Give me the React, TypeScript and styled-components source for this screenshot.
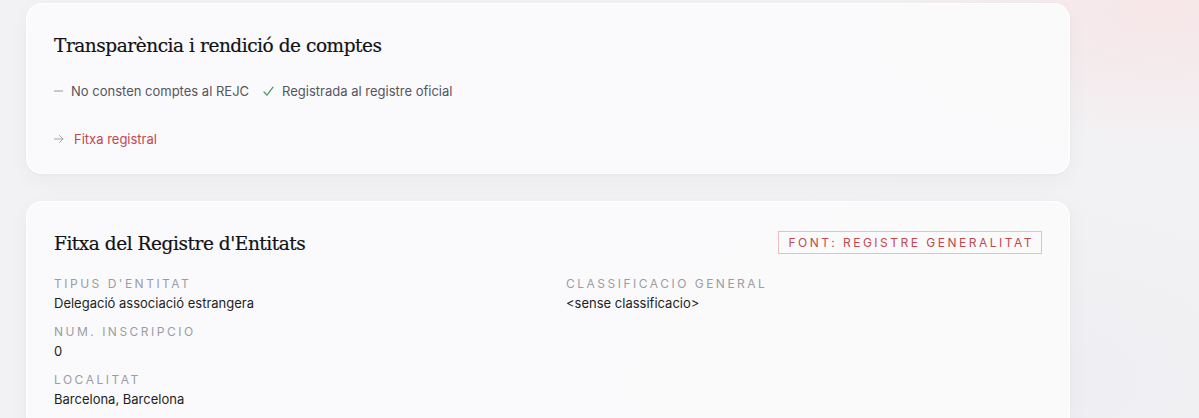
import React from "react";
import styled, { createGlobalStyle } from "styled-components";

const Global = createGlobalStyle`
  html, body { margin: 0; padding: 0; }
  body {
    background: #f2f2f4;
    font-family: Inter, "Noto Sans", sans-serif;
    -webkit-font-smoothing: antialiased;
  }
`;

const Page = styled.div`
  box-sizing: border-box;
  padding: 3px 0 0 26px;
  background:
    radial-gradient(ellipse 420px 200px at 1160px 10px, rgba(250, 220, 222, 0.55), rgba(250, 220, 222, 0) 70%),
    radial-gradient(ellipse 600px 300px at 1000px 380px, rgba(236, 236, 242, 0.6), rgba(236, 236, 242, 0) 70%),
    #f2f2f4;
  overflow: hidden;
  height: 418px;
`;

const Stack = styled.div`
  width: 1044px;
  display: flex;
  flex-direction: column;
  gap: 27px;
`;

const Card = styled.section`
  box-sizing: border-box;
  background: rgba(251, 251, 252, 0.92);
  border: 1px solid rgba(255, 255, 255, 0.95);
  border-radius: 16px;
  box-shadow: 0 6px 24px rgba(20, 20, 40, 0.035), 0 1px 3px rgba(20, 20, 40, 0.03);
  padding: 27px 27px 24px;
  display: flex;
  flex-direction: column;
`;

const HeaderRow = styled.div`
  display: flex;
  align-items: center;
  justify-content: space-between;
`;

const Title = styled.h2`
  margin: 0;
  font-family: "DejaVu Serif", "Liberation Serif", serif;
  font-weight: 400;
  font-size: 18.5px;
  line-height: 30px;
  color: #111116;
  letter-spacing: -0.45px;
  -webkit-text-stroke: 0.2px #111116;
`;

const Badge = styled.span`
  border: 1px solid #efbdc1;
  color: #c4474f;
  font-size: 12px;
  line-height: 21px;
  letter-spacing: 2.5px;
  padding: 0 7px 0 9px;
  margin-top: -3px;
  text-transform: uppercase;
`;

const StatusRow = styled.div`
  margin-top: 20px;
  display: flex;
  align-items: center;
  gap: 14px;
  font-size: 13px;
  line-height: 20px;
  color: #55555c;
`;

const Status = styled.span`
  display: inline-flex;
  align-items: center;
  gap: 8px;
`;

const Mark = styled.span<{ $tone: "muted" | "ok" }>`
  color: ${(p) => (p.$tone === "ok" ? "#3f9a5f" : "#a0a0a6")};
  font-size: 13px;
  display: inline-flex;
  align-items: center;
`;

const LinkRow = styled.a`
  margin-top: 28px;
  display: inline-flex;
  align-items: center;
  gap: 10px;
  font-size: 13px;
  line-height: 20px;
  color: #c4474f;
  text-decoration: none;
`;

const Arrow = styled.span`
  color: #a3a3a9;
  display: inline-flex;
`;

const Grid = styled.div`
  margin-top: 16px;
  display: grid;
  grid-template-columns: 1fr 1fr;
  column-gap: 36px;
  align-items: start;
`;

const Column = styled.div`
  display: flex;
  flex-direction: column;
  gap: 10px;
`;

const Field = styled.div`
  display: flex;
  flex-direction: column;
`;

const Label = styled.div`
  font-size: 12px;
  line-height: 18px;
  letter-spacing: 2.5px;
  color: #9c9ca3;
  text-transform: uppercase;
`;

const Value = styled.div`
  font-size: 13px;
  line-height: 20px;
  color: #1e1e23;
`;

const Dash = () => (
  <svg width="9" height="10" viewBox="0 0 9 10" aria-hidden>
    <line x1="0" y1="5" x2="9" y2="5" stroke="currentColor" strokeWidth="1.1" />
  </svg>
);

const Check = () => (
  <svg width="11" height="11" viewBox="0 0 11 11" aria-hidden>
    <path d="M1 6 L4 9.2 L10 1.2" fill="none" stroke="currentColor" strokeWidth="1.2" strokeLinecap="round" strokeLinejoin="round" />
  </svg>
);

const ArrowIcon = () => (
  <svg width="10" height="10" viewBox="0 0 10 10" aria-hidden>
    <path d="M0.5 5 H9 M5.5 1.5 L9 5 L5.5 8.5" fill="none" stroke="currentColor" strokeWidth="1" strokeLinecap="round" strokeLinejoin="round" />
  </svg>
);

export default function App() {
  return (
    <>
      <Global />
      <Page>
        <Stack>
          <Card>
            <Title>Transparència i rendició de comptes</Title>
            <StatusRow>
              <Status>
                <Mark $tone="muted"><Dash /></Mark>
                No consten comptes al REJC
              </Status>
              <Status>
                <Mark $tone="ok"><Check /></Mark>
                Registrada al registre oficial
              </Status>
            </StatusRow>
            <div>
              <LinkRow href="#">
                <Arrow><ArrowIcon /></Arrow>
                Fitxa registral
              </LinkRow>
            </div>
          </Card>
          <Card>
            <HeaderRow>
              <Title>Fitxa del Registre d'Entitats</Title>
              <Badge>Font: Registre Generalitat</Badge>
            </HeaderRow>
            <Grid>
              <Column>
                <Field>
                  <Label>Tipus d'entitat</Label>
                  <Value>Delegació associació estrangera</Value>
                </Field>
                <Field>
                  <Label>Num. Inscripcio</Label>
                  <Value>0</Value>
                </Field>
                <Field>
                  <Label>Localitat</Label>
                  <Value>Barcelona, Barcelona</Value>
                </Field>
              </Column>
              <Column>
                <Field>
                  <Label>Classificacio General</Label>
                  <Value>&lt;sense classificacio&gt;</Value>
                </Field>
              </Column>
            </Grid>
          </Card>
        </Stack>
      </Page>
    </>
  );
}
